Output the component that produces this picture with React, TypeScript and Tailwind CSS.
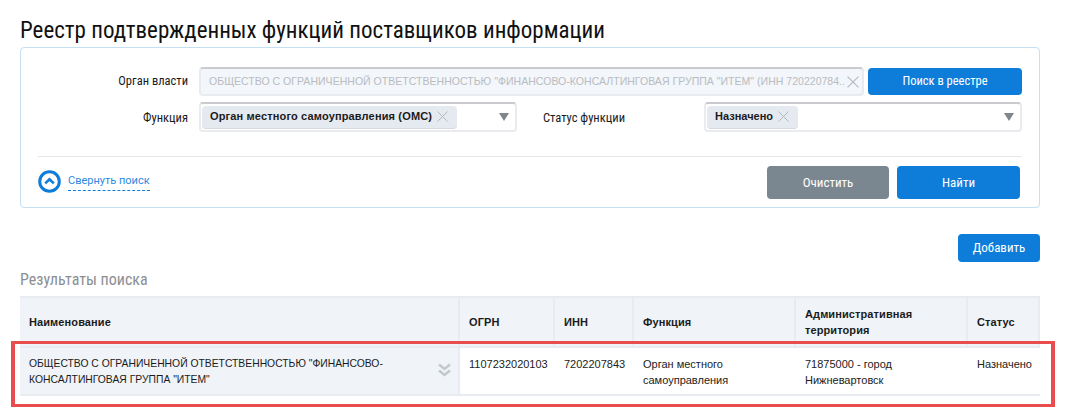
const condensed = "font-['Roboto','Liberation_Sans',sans-serif] [font-stretch:75%]";

const Cross = ({ size = 11 }: { size?: number }) => (
  <svg width={size} height={size} viewBox="0 0 11 11" className="shrink-0" fill="none" stroke="#b4b9c0" strokeWidth="1">
    <path d="M0.5 0.5L10.5 10.5M10.5 0.5L0.5 10.5" />
  </svg>
);

const Arrow = () => (
  <div className="h-0 w-0 border-x-[5.5px] border-t-[8px] border-x-transparent border-t-[#7f868c]" />
);

const Chip = ({ label, className = "" }: { label: string; className?: string }) => (
  <div className={`flex h-[23px] items-center gap-[5px] rounded-sm border-b border-[#d5d9df] bg-[#e5e9f0] pl-2 pr-[9px] text-[11px] font-bold text-[#1b1b1b] ${className}`}>
    {label}
    <Cross />
  </div>
);

const Select = ({ label, className, chipClass }: { label: string; className: string; chipClass?: string }) => (
  <div className={`flex h-[30px] items-center justify-between rounded-sm border-2 border-[#e9ebee] border-t-[#c9cbce] pl-[1px] pr-[6px] ${className}`}>
    <Chip label={label} className={chipClass} />
    <Arrow />
  </div>
);

const headers = ["Наименование", "ОГРН", "ИНН", "Функция", "Административная территория", "Статус"];

const App = () => {
  return (
    <div className="relative h-[413px] w-[1066px] overflow-hidden bg-white pl-5 pt-[17px] font-['Liberation_Sans',sans-serif] text-[#1b1b1b]">
      <h1 className={`${condensed} text-[23px] leading-[27px] font-[430] text-[#111]`}>
        Реестр подтвержденных функций поставщиков информации
      </h1>

      {/* search panel */}
      <div className="mt-[3px] h-[161px] w-[1020px] rounded-sm border border-[#c5dff3] pl-[17px] pr-[17px] pt-[19px]">
        <div className="flex items-center">
          <label className={`${condensed} w-[150px] text-right text-[12.5px] font-[430]`}>Орган власти</label>
          <div className="ml-[11px] flex h-[29px] w-[665px] items-center justify-between overflow-hidden rounded-sm border-2 border-[#e9ebee] border-t-[#c9cbce] bg-[#f3f6fb] pl-2 pr-[3px] text-[10.55px] text-[#b9bcc1]">
            <span className="whitespace-nowrap">ОБЩЕСТВО С ОГРАНИЧЕННОЙ ОТВЕТСТВЕННОСТЬЮ "ФИНАНСОВО-КОНСАЛТИНГОВАЯ ГРУППА "ИТЕМ" (ИНН 720220784..</span>
            <Cross size={12} />
          </div>
          <button className={`${condensed} ml-1 h-[27px] w-[154px] rounded-sm bg-[#0d7dd9] text-[12.5px] font-[430] text-white`}>Поиск в реестре</button>
        </div>

        <div className="mt-[6px] flex items-center">
          <label className={`${condensed} w-[150px] pt-[2px] text-right text-[12.5px] font-[430]`}>Функция</label>
          <Select label="Орган местного самоуправления (ОМС)" className="ml-[11px] w-[318px]" chipClass="tracking-[0.15px]" />
          <label className={`${condensed} ml-[26px] w-[161px] pt-[2px] text-[12.5px] font-[430]`}>Статус функции</label>
          <Select label="Назначено" className="w-[318px]" />
        </div>

        <div className="mt-6 flex h-[50px] items-start justify-between border-t border-[#e4e6e9] pt-[9px]">
          <div className="flex items-center gap-[7px] pt-1">
            <svg width="23" height="23" viewBox="0 0 23 23" fill="none" stroke="#0d7dd9">
              <circle cx="11.5" cy="11.5" r="9.8" strokeWidth="3" />
              <path d="M7.2 13.4L11.5 9.3L15.8 13.4" strokeWidth="2.6" />
            </svg>
            <span className="border-b border-dashed border-[#0d7dd9] pb-[2px] pt-[2px] font-['Roboto',sans-serif] text-[11px] leading-[14px] text-[#2b8ae0]">Свернуть поиск</span>
          </div>
          <div className="mr-[2px] flex gap-2">
            <button className={`${condensed} h-[33px] w-[122px] rounded-sm bg-[#7a8791] text-[13px] font-[430] text-white`}>Очистить</button>
            <button className={`${condensed} h-[33px] w-[123px] rounded-sm bg-[#0d7dd9] text-[13px] font-[430] text-white`}>Найти</button>
          </div>
        </div>
      </div>

      <div className="mt-[26px] flex w-[1020px] justify-end">
        <button className={`${condensed} h-[28px] w-[82px] rounded-sm bg-[#0d7dd9] text-[13px] font-[430] text-white`}>Добавить</button>
      </div>

      <h2 className={`${condensed} mt-2 text-[16px] leading-[20px] font-[430] text-[#8b8f94]`}>Результаты поиска</h2>

      {/* results table */}
      <div className="mt-[6px] grid w-[1020px] grid-cols-[440px_95px_79px_162px_172px_72px] text-[11px] leading-4">
        {headers.map((h) => (
          <div key={h} className="flex h-[50px] items-center border-r-2 border-t-2 border-[#e8ebef] bg-[#f0f3f7] pl-[9px] pr-2 font-bold tracking-[0.1px] text-[#1b1b1b] last:border-r-0">
            {h}
          </div>
        ))}
        <div className="relative h-[50px] border-y-2 border-r-2 border-[#e8ebef] bg-[#f0f3f7] pl-[9px] pr-[50px] pt-[8px] text-[10.35px]">
          ОБЩЕСТВО С ОГРАНИЧЕННОЙ ОТВЕТСТВЕННОСТЬЮ "ФИНАНСОВО-КОНСАЛТИНГОВАЯ ГРУППА "ИТЕМ"
          <svg width="13" height="14" viewBox="0 0 13 14" fill="none" stroke="#c3c8cd" strokeWidth="2.4" className="absolute right-[7px] top-[15px]">
            <path d="M1 1.5L6.5 6L12 1.5M1 7.5L6.5 12L12 7.5" />
          </svg>
        </div>
        {["1107232020103", "7202207843", "Орган местного самоуправления", "71875000 - город Нижневартовск", "Назначено"].map((c) => (
          <div key={c} className="h-[50px] border-y-2 border-[#e8ebef] pl-[9px] pr-1 pt-[8px] text-[#222]">
            {c}
          </div>
        ))}
      </div>

      {/* red annotation frame */}
      <div className="absolute left-[11px] top-[341px] h-[66px] w-[1044px] border-x-4 border-y-[3px] border-[#e84c4c]" />
    </div>
  );
};

export default App;
